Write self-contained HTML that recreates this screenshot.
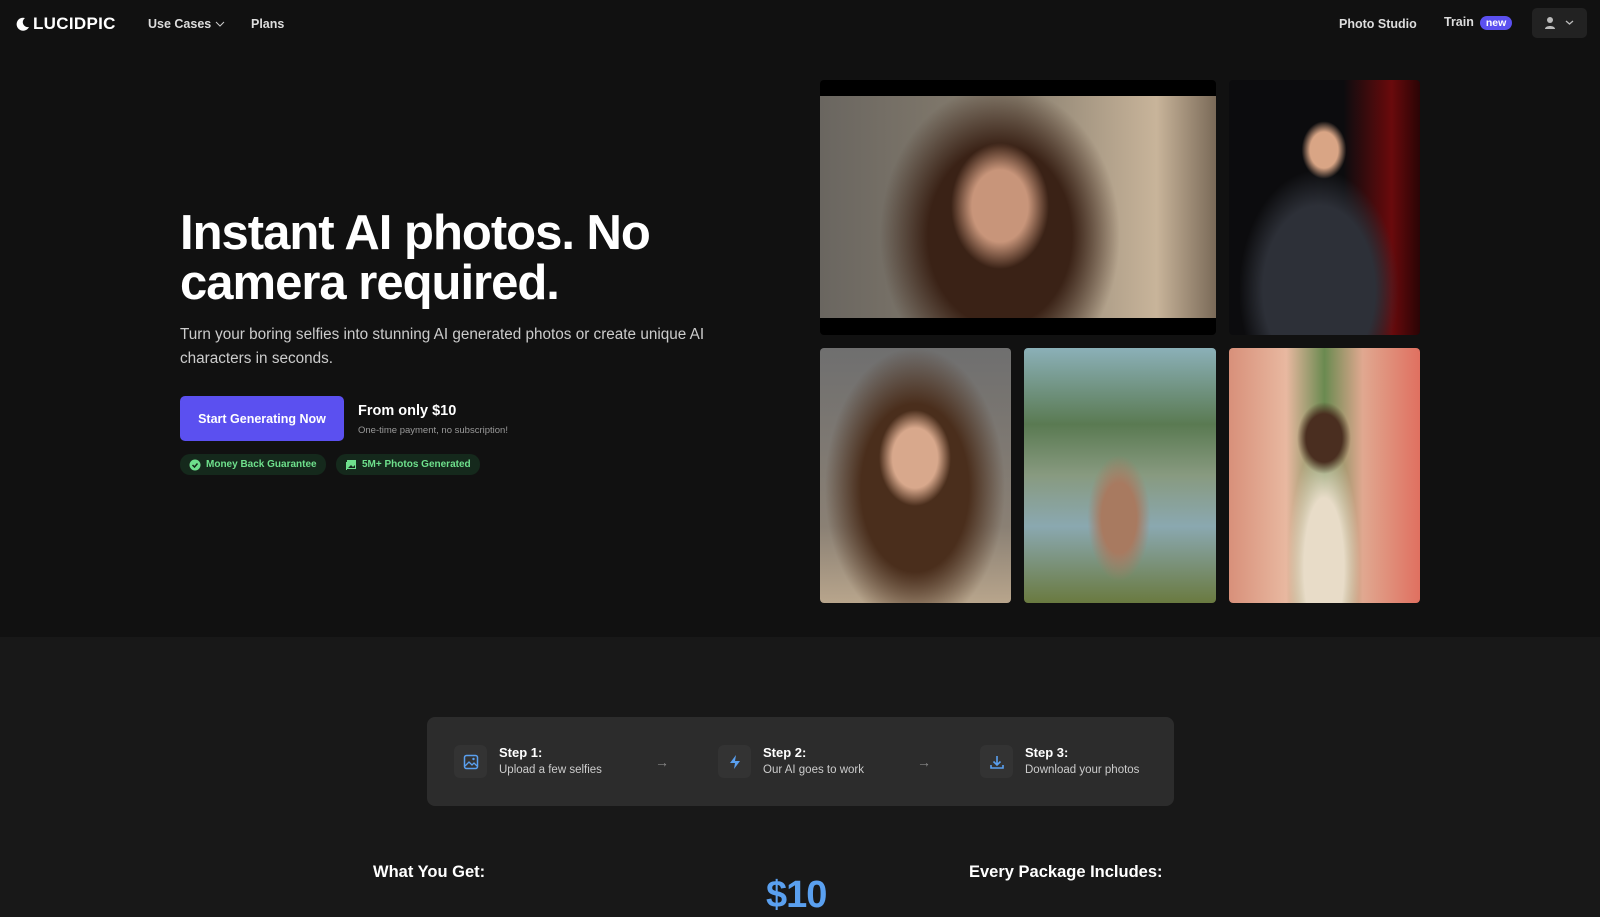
<!DOCTYPE html>
<html><head><meta charset="utf-8"><style>
*{margin:0;padding:0;box-sizing:border-box}
body{width:1600px;height:900px;overflow:hidden;background:#181818;font-family:"Liberation Sans",sans-serif;color:#fff}
.top{position:absolute;left:0;top:0;width:1600px;height:637px;background:#111111}
.logo{position:absolute;left:16px;top:14px;font-size:17px;font-weight:bold;letter-spacing:0.3px;display:flex;align-items:center;gap:3px}
.nl{position:absolute;top:17px;font-size:12.5px;color:#ddd;font-weight:bold}
.badge{background:#5b50f0;color:#fff;border-radius:9px;padding:1px 6px;font-size:10.5px;margin-left:6px}
.user{position:absolute;left:1532px;top:8px;width:55px;height:30px;background:#222;border-radius:5px}
h1{position:absolute;left:180px;top:208px;font-size:49px;line-height:50px;font-weight:bold;letter-spacing:-1px;width:560px}
.sub{position:absolute;left:180px;top:323px;font-size:15.3px;line-height:24px;color:#ccc;width:560px}
.btn{position:absolute;left:180px;top:396px;width:164px;height:45px;background:#5b50f0;border-radius:5px;font-size:12.5px;font-weight:bold;display:flex;align-items:center;justify-content:center}
.from{position:absolute;left:358px;top:403px;font-size:14.5px;font-weight:bold}
.ot{position:absolute;left:358px;top:425px;font-size:9.5px;color:#999}
.pill{position:absolute;top:454px;height:21px;background:#15291c;border-radius:10px;color:#6ee08c;font-size:10px;font-weight:bold;display:flex;align-items:center;gap:5px;padding:0 9px}
.ph{position:absolute;border-radius:4px;overflow:hidden}
.steps{position:absolute;left:427px;top:717px;width:747px;height:89px;background:#2c2c2c;border-radius:8px}
.st{position:absolute;top:28px;display:flex;gap:12px}
.ic{width:33px;height:33px;background:#333;border-radius:6px;display:flex;align-items:center;justify-content:center}
.st b{display:block;font-size:13px}
.st span{font-size:11.5px;color:#ccc}
.ar{position:absolute;top:37px;color:#888;font-size:14px}
.h3{position:absolute;top:863px;font-size:16.5px;font-weight:bold}
</style></head><body>
<div class="top">
<div class="logo"><svg width="14" height="14" viewBox="0 0 14 14"><path d="M9 1A6.5 6.5 0 1 0 13 10 5 5 0 0 1 9 1z" fill="#fff"/></svg>LUCIDPIC</div>
<div class="nl" style="left:148px">Use Cases <svg width="10" height="8" viewBox="0 0 10 8"><path d="M1 2l4 4 4-4" stroke="#ccc" fill="none"/></svg></div>
<div class="nl" style="left:251px">Plans</div>
<div class="nl" style="left:1339px">Photo Studio</div>
<div class="nl" style="left:1444px;top:15px">Train<span class="badge">new</span></div>
<div class="user"><svg style="position:absolute;left:11px;top:8px" width="14" height="14" viewBox="0 0 14 14"><circle cx="7" cy="4" r="3" fill="#bbb"/><path d="M2 13c0-4 10-4 10 0z" fill="#bbb"/></svg><svg style="position:absolute;left:33px;top:11px" width="9" height="7" viewBox="0 0 9 7"><path d="M1 2l3.5 3 3.5-3" stroke="#bbb" fill="none" stroke-width="1.3"/></svg></div>
<h1>Instant AI photos. No camera required.</h1>
<div class="sub">Turn your boring selfies into stunning AI generated photos or create unique AI characters in seconds.</div>
<div class="btn">Start Generating Now</div>
<div class="from">From only $10</div>
<div class="ot">One-time payment, no subscription!</div>
<div class="pill" style="left:180px"><svg width="12" height="12" viewBox="0 0 12 12"><circle cx="6" cy="6" r="5.5" fill="#6ee08c"/><path d="M3.5 6l2 2 3-3.5" stroke="#15291c" stroke-width="1.5" fill="none"/></svg>Money Back Guarantee</div>
<div class="pill" style="left:336px"><svg width="12" height="12" viewBox="0 0 12 12"><rect x="2" y="1" width="9" height="9" fill="#6ee08c"/><rect x="1" y="3" width="1" height="8" fill="#6ee08c"/><path d="M3 9l3-3 2 2 2-2v3z" fill="#15291c"/></svg>5M+ Photos Generated</div>
<div class="ph" style="left:820px;top:80px;width:396px;height:255px;background:#000"><div style="position:absolute;top:16px;left:0;width:396px;height:222px;background:radial-gradient(ellipse 70px 90px at 180px 110px,#c8957a 40%,transparent 70%),radial-gradient(ellipse 120px 150px at 180px 140px,#3a2216 60%,transparent 100%),linear-gradient(90deg,#6a6660,#8a8070 50%,#c8b49a 85%,#7a6a58)"></div></div>
<div class="ph" style="left:1229px;top:80px;width:191px;height:255px;background:radial-gradient(ellipse 28px 36px at 95px 70px,#d9a585 50%,transparent 80%),radial-gradient(ellipse 80px 120px at 90px 210px,#2d3038 70%,transparent 100%),linear-gradient(90deg,#0c0c0e 60%,#6a0a0c 85%,#2a0405)"></div>
<div class="ph" style="left:820px;top:348px;width:191px;height:255px;background:radial-gradient(ellipse 45px 60px at 95px 110px,#d8a88c 50%,transparent 80%),radial-gradient(ellipse 90px 140px at 95px 140px,#4a2e1c 60%,transparent 100%),linear-gradient(180deg,#6f6f6f,#8a8074 70%,#b8a58c)"></div>
<div class="ph" style="left:1024px;top:348px;width:192px;height:255px;background:radial-gradient(ellipse 35px 70px at 95px 170px,#a87a60 50%,transparent 90%),linear-gradient(180deg,#8bb0b8 0%,#5a7a52 30%,#889a80 50%,#8aa8b0 70%,#6a7a40 100%)"></div>
<div class="ph" style="left:1229px;top:348px;width:191px;height:255px;background:radial-gradient(ellipse 30px 40px at 95px 90px,#4a2e20 60%,transparent 90%),radial-gradient(ellipse 40px 140px at 95px 220px,#e8dcc8 50%,transparent 90%),linear-gradient(90deg,#d8907a,#e8b8a0 30%,#6a8a50 50%,#e0a890 70%,#e07060)"></div>
</div>
<div class="steps">
<div class="st" style="left:27px"><div class="ic"><svg width="16" height="16" viewBox="0 0 16 16"><rect x="1.5" y="1.5" width="13" height="13" rx="2" fill="none" stroke="#5aa0f0" stroke-width="1.5"/><path d="M2 12l4-4 3 3 2-2 3 3" fill="none" stroke="#5aa0f0" stroke-width="1.3"/><circle cx="10.5" cy="5" r="1.2" fill="#5aa0f0"/></svg></div><div><b>Step 1:</b><span>Upload a few selfies</span></div></div>
<div class="ar" style="left:228px">→</div>
<div class="st" style="left:291px"><div class="ic"><svg width="16" height="16" viewBox="0 0 16 16"><path d="M9 1L3 9h5l-1 6 6-8H8z" fill="#5aa0f0"/></svg></div><div><b>Step 2:</b><span>Our AI goes to work</span></div></div>
<div class="ar" style="left:490px">→</div>
<div class="st" style="left:553px"><div class="ic"><svg width="16" height="16" viewBox="0 0 16 16"><path d="M8 2v9M4.5 7.5L8 11l3.5-3.5M2 11v3h12v-3" fill="none" stroke="#5aa0f0" stroke-width="1.6"/></svg></div><div><b>Step 3:</b><span>Download your photos</span></div></div>
</div>
<div class="h3" style="left:373px">What You Get:</div>
<div style="position:absolute;left:766px;top:874px;font-size:38px;font-weight:bold;color:#5aa0f0;letter-spacing:-1px">$10</div>
<div class="h3" style="left:969px">Every Package Includes:</div>
</body></html>
